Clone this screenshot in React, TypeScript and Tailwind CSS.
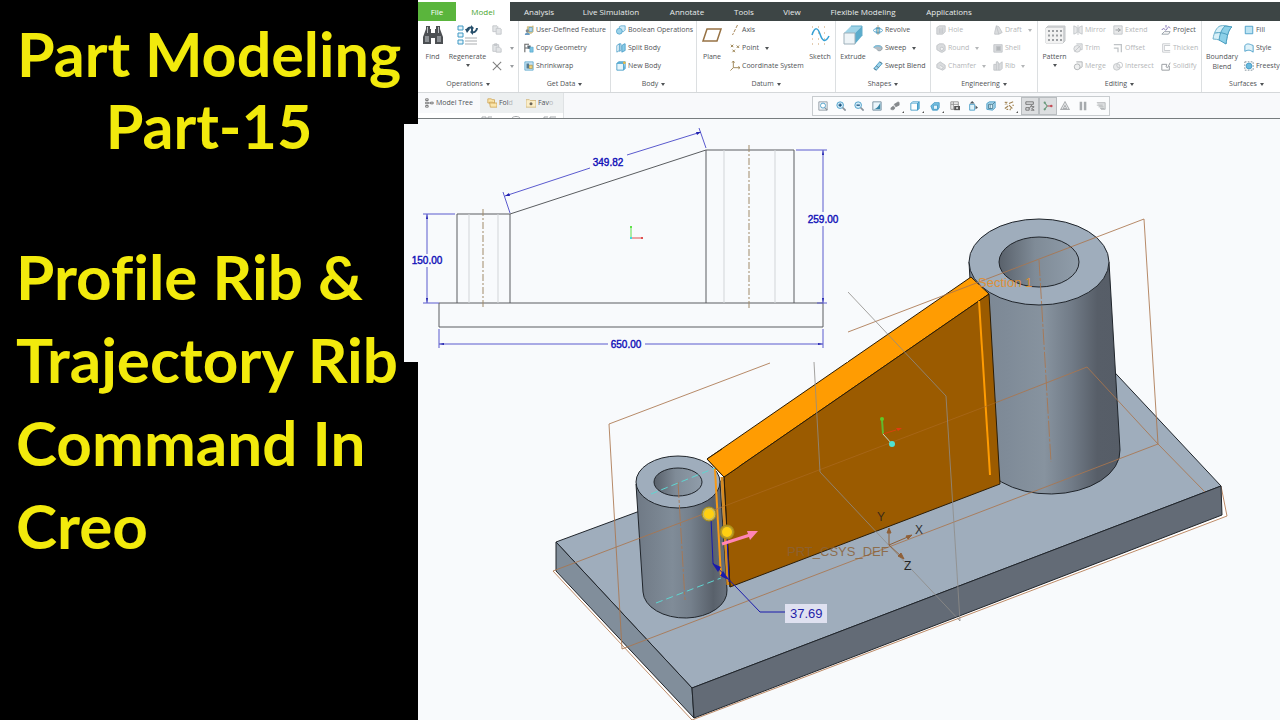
import React from 'react';

const blue = '#3f98c4';
const steel = '#8a949c';
const pale = '#bfc3c6';

// Glyphs of the small commands, all on a 12 x 12 grid
const glyphs: Record<string, React.ReactNode> = {
    copy: <g fill="#e3e5e7" stroke={pale}><path d="M1 1h5l1 1v6H1z" /><path d="M5 4h5l1 1v6H5z" /></g>,
    paste: <g fill="#e3e5e7" stroke={pale}><path d="M1 2h7v8H1zM3 1h3v2H3z" /><path d="M5 5h4l2 2v4H5z" /></g>,
    remove: <path d="M1 1l10 10M11 1L1 11" stroke="#808080" strokeWidth="1.3" />,
    userFeature: <g><path d="M4 2h5l2-1v7l-2 2H4z" fill="#e8cf88" stroke="#b39a5a" strokeWidth=".6" /><path d="M6 3h4v5H6z" fill="#b9d8ee" stroke={blue} strokeWidth=".7" /><circle cx="4" cy="7" r="2" fill="#888" /><path d="M1 12c0-4 6-4 6 0z" fill="#6a9bc4" /></g>,
    copyGeometry: <g><path d="M1 1v10M1 1.500h5M1 6h3" stroke="#666" strokeWidth="1.300" fill="none" /><path d="M4 3h4v4H4z" fill="#5d6b76" /><path d="M7 5h4v6H7z" fill="#7cc3e2" stroke={blue} strokeWidth=".6" /></g>,
    shrinkwrap: <g><path d="M1 1h10v10H1z" fill="#c7e3f2" stroke={blue} strokeWidth=".8" /><path d="M3 3h3v6H3z" fill="#527a95" /><path d="M6 5h4v4H6z" fill="#f1d277" stroke="#8f7a38" strokeWidth=".6" /></g>,
    booleanOps: <g stroke={blue} strokeWidth=".8"><path d="M4 2l2-1h5v5l-2 2H4z" fill="#cfeaf6" /><circle cx="4" cy="7.500" r="3.500" fill="#9bd2ea" /></g>,
    split: <g stroke={blue} strokeWidth=".9"><path d="M1 3l3-2v8l-3 2z" fill="#fff" /><path d="M4 1h2v8l-2 1z" fill="#d7eef8" /><path d="M7 3l3-2h1v8l-4 2z" fill="#8ccbe6" /></g>,
    newBody: <g><path d="M1 3h8v8H1z" fill="#e6f5fb" stroke={blue} /><path d="M1 3l2-2h8L9 3M9 11l2-2V1" fill="#6bbadd" stroke={blue} /><circle cx="10" cy="2" r="1.500" fill="#f0b73a" /></g>,
    axis: <path d="M9 0L3 12" stroke="#a88658" strokeWidth="1.200" strokeDasharray="4 1.500" />,
    point: <path d="M1 2l3 3M4 2L1 5M8 3l3 3M11 3L8 6M3 8l3 3M6 8l-3 3" stroke="#9c8352" strokeWidth="1.200" />,
    csys: <path d="M4 0v8h8M4 8l-3.500 3.500M2.500 2L4 0l1.500 2M10 6.500L12 8l-2 1.500" fill="none" stroke="#9c8352" strokeWidth="1.100" />,
    revolve: <g><path d="M4 3h4v7H4z" fill="#b9e0f0" stroke={blue} strokeWidth=".8" /><ellipse cx="6" cy="6.500" rx="5.500" ry="2.300" fill="none" stroke={blue} /><path d="M6 0v12" stroke="#a07a48" strokeWidth=".7" /></g>,
    sweep: <g><path d="M1 6c0-4 10-4 10 0s-5 4-6 2" fill="#b3bdc4" stroke="#8a979f" /><path d="M1 5c3-2 6-2 9 0" stroke="#7cc3e2" fill="none" strokeWidth="1.500" /></g>,
    sweptBlend: <g><path d="M1 9l7-8 3 2-7 8z" fill="#9dd3ea" stroke={blue} /><path d="M1 9l3 2M4 6l3 2M8 1l3 2" stroke="#5d7683" /></g>,
    hole: <g stroke={pale}><path d="M1 3l3-2h7v7l-3 3H1z" fill="#dadcde" /><path d="M4 4v6M6 4v6M8 3v7" /></g>,
    round: <g stroke={pale}><path d="M1 3l3-2h4c2 0 3 2 3 4v4l-3 2H6L1 8z" fill="#dadcde" /><circle cx="7" cy="7" r="2" fill="#f3f3f3" /></g>,
    chamfer: <g stroke={pale}><path d="M1 4l4-3 6 4v4l-3 2-7-3z" fill="#dadcde" /><path d="M5 5l4 3-3 2" fill="#f3f3f3" /></g>,
    draft: <g stroke={pale}><path d="M2 9l2-8 3 1 4 7-4 2H2z" fill="#dadcde" /><path d="M4 1l3 10" /></g>,
    shell: <g stroke={pale}><path d="M1 2h10v9H1z" fill="#dadcde" /><path d="M4 4h5v5H4z" fill="#b4b7ba" /></g>,
    rib: <g stroke={pale}><path d="M1 4h3V1h2l1 3 4-3v8l-2 2H1z" fill="#dadcde" /><path d="M4 4v7M7 4v7" /></g>,
    mirror: <path d="M1 1l4 2v6l-4 2zM11 1L7 3v6l4 2zM6 0v12" fill="#e8e9ea" stroke={pale} />,
    trim: <g stroke={pale} fill="#e8e9ea"><path d="M4 1h7v7H8" /><circle cx="5" cy="7" r="4" /><path d="M2 10l7-7" /></g>,
    merge: <g stroke="#a9adb0" fill="#eff0f0"><path d="M4 1h7v6L8 9" /><circle cx="5" cy="7" r="3.500" /></g>,
    extend: <g stroke={pale} fill="#e8e9ea"><path d="M1 1h10v10H1z" /><path d="M3 6h5M6 4l3 2-3 2" stroke="#8d9194" /></g>,
    offset: <g stroke={pale} fill="none" strokeWidth="1.500"><path d="M1 2h9v9" /><path d="M1 6h5v5" /></g>,
    intersect: <g stroke={pale} fill="#e8e9ea"><circle cx="4.500" cy="7" r="4" /><circle cx="8" cy="5" r="3.500" fill="none" /></g>,
    project: <g fill="none"><path d="M1 6c3-5 4 3 6-1s3-3 4-1" stroke="#6c5ca6" /><path d="M1 11l3-3h7l-2 3z" stroke={steel} /><path d="M6 0v3" stroke="#6c5ca6" /></g>,
    thicken: <path d="M11 1H2v10h9M11 3H4v6h7" fill="none" stroke={pale} />,
    solidify: <path d="M1 4h6l-1 3 2 1 3-6M1 4v7h9V6" fill="none" stroke="#9da1a5" strokeWidth="1.200" />,
    fill: <path d="M1.500 1.500h9v9h-9z" fill="#bde4f3" stroke={blue} />,
    style: <path d="M1 10V3c3-3 5-2 10 0v8c-4-3-6-3-10-1z" fill="#dff2f9" stroke={blue} />,
    freestyle: <g><path d="M1 1h10v10H1z" fill="none" stroke="#6d7f8a" strokeDasharray="2 1.500" /><circle cx="6" cy="6" r="3.500" fill="#6bbadd" stroke={blue} /></g>,
    refit: <g fill="none" stroke={steel}><path d="M1 1h10v10H1z" fill="#edf3f7" /><circle cx="6" cy="5.500" r="3" stroke={blue} fill="#fff" /><path d="M8 8l3 3" strokeWidth="1.500" /></g>,
    zoomIn: <g><circle cx="5" cy="5" r="4" fill="#d4edfa" stroke={blue} /><path d="M3 5h4M5 3v4" stroke="#174d78" strokeWidth="1.500" /><path d="M8 8l3.500 3.500" stroke={steel} strokeWidth="2" /></g>,
    zoomOut: <g><circle cx="5" cy="5" r="4" fill="#d4edfa" stroke={blue} /><path d="M3 5h4" stroke="#174d78" strokeWidth="1.500" /><path d="M8 8l3.500 3.500" stroke={steel} strokeWidth="2" /></g>,
    repaint: <g><path d="M1 1h10v10H1z" fill="#eaf6fb" stroke="#6b8797" /><path d="M10 2v8H2C6 9 8 6 10 2z" fill="#3986a6" /></g>,
    rendering: <path d="M1 10c0-3 2-3 3-4l2 2c-1 3-3 3-5 2zM5 4l5-3 1 1v3L7 7z" fill="#85898c" stroke="#85898c" strokeWidth=".8" />,
    display: <g stroke={blue}><path d="M1 3h8v8H1z" fill="#fff" /><path d="M1 3l2-2h8L9 3" fill="#d4edfa" /><path d="M9 3l2-2v8l-2 2z" fill="#6bbadd" /></g>,
    orient: <g stroke={blue}><path d="M1 6l4-4h6v6l-2 3H3z" fill="#7bc1e1" /><path d="M4 5h5v5H4z" fill="#e6f5fb" /></g>,
    viewMgr: <g><path d="M1 1h9v9H1zM1 4h9M4 1v9" fill="#f6f6f6" stroke="#888" /><path d="M5 6h7v5H5z" fill="#555" /><circle cx="8.500" cy="8.500" r="1.300" fill="#ddd" /></g>,
    annotation: <g><path d="M2 4h6v7H2z" fill="#dff2f9" stroke={blue} /><path d="M5 0l3 3H2zM9 5l3 3-3 2z" fill="#4f5b62" /></g>,
    section: <g stroke={blue}><path d="M1 3l3-2h7v7l-3 3-7-1z" fill="#a7d6ea" /><path d="M3 4h5v5H3zM8 4l3-3M5 4v5" fill="#dff2f9" stroke="#457890" /></g>,
    datums: <path d="M1 1l3 3M4 1L1 4M6 3l5-2M1 9l4-3M6 5l4 4M3 10h2M7 11l1-2M10 5h2" stroke="#a08352" strokeWidth="1.300" />,
    notes: <g fill="none" stroke="#666"><path d="M1 1h9v3H1zM1 8h4v3H1zM7 6l4 1-3 2 3 2H7" /><path d="M5 9l3-4" /></g>,
    spin: <g strokeWidth="1.300"><path d="M5 6h5" stroke="#c34b55" /><path d="M2 2l3 4-3 4" stroke="#6b9a7c" fill="none" /><circle cx="2" cy="2" r="1.300" fill="#6b9a7c" /><circle cx="2" cy="10" r="1.300" fill="#6b9a7c" /><circle cx="10" cy="6" r="1.500" fill="#c34b55" /></g>,
    regen: <path d="M6 1l5 9H1zM6 5l2 4H4z" fill="none" stroke="#acafb2" strokeWidth="1.300" />,
    pause: <path d="M2 1h3v10H2zM7 1h3v10H7z" fill="#a6aaad" />,
    exit: <g stroke="#b0b3b6" fill="#dddfe0"><path d="M1 2h10v8H6" /><path d="M1 5h7M3 7h6M5 9h5" /></g>,
    tree: <path d="M2 1h3v2H2zM2 5h3v2H2zM2 9h3v2H2zM8 5h3v2H8zM5 6h3" fill="none" stroke="#666" />,
    folder: <path d="M1 1h4l1 1h3v4H1zM3 5h4l1 1h4v5H4z" fill="#fbe6ac" stroke="#cfa658" />,
    favorite: <g><path d="M0 2h4l1 1h7v8H0z" fill="#fbeec8" stroke="#cfb578" /><circle cx="6" cy="7" r="1.800" fill="#6d6658" /></g>,
};

const Glyph: React.FC<{ name: string }> = ({ name }) => (
    <svg viewBox="0 0 12 12" fill="none" className="h-[10px] w-[10px] shrink-0" aria-hidden="true">{glyphs[name]}</svg>
);

const Arrow: React.FC = () => (
    <svg viewBox="0 0 4 3" className="h-[3px] w-[4px] shrink-0" aria-hidden="true"><path d="M0 0h4L2 3z" fill="currentColor" /></svg>
);

const Command: React.FC<{ icon: string; label: string; menu?: boolean; disabled?: boolean }> = ({ icon, label, menu, disabled }) => (
    <button disabled={disabled} className="flex h-[18px] items-center gap-[2px] whitespace-nowrap disabled:text-[#b4b6b8]">
        <Glyph name={icon} />
        <span>{label}</span>
        {menu && <span className="ml-1"><Arrow /></span>}
    </button>
);

const BigCommand: React.FC<{ label: string; second?: string; menu?: boolean; width: string; children: React.ReactNode }> = ({ label, second, menu, width, children }) => (
    <button className={`flex h-[54px] shrink-0 flex-col items-center pt-[3px] ${width}`}>
        <svg viewBox="0 0 22 22" fill="none" className="h-[22px] w-[22px]" aria-hidden="true">{children}</svg>
        <span className="mt-[6px] leading-[10px]">{label}</span>
        {second && <span className="leading-[9px]">{second}</span>}
        {menu && <span className="pt-[2px]"><Arrow /></span>}
    </button>
);

const Group: React.FC<{ title: string; width: string; children: React.ReactNode }> = ({ title, width, children }) => (
    <section className={`flex shrink-0 flex-col border-r border-[#dcdfe1] ${width}`}>
        <div className="flex h-[54px]">{children}</div>
        <button className="flex h-[18px] items-center justify-center gap-[3px] pt-[2px]">{title}<Arrow /></button>
    </section>
);

const Tabs: React.FC = () => (
    <nav className="mt-[2px] flex h-[19px] shrink-0 items-stretch overflow-hidden bg-[#3d4545] text-[8px] text-[#e8ecec]">
        <button className="w-[38px] shrink-0 bg-[#5ab53c] text-white">File</button>
        <button className="w-[54px] shrink-0 bg-white text-[#4aa52e]">Model</button>
        <button className="w-[58px] shrink-0">Analysis</button>
        <button className="w-[86px] shrink-0">Live Simulation</button>
        <button className="w-[66px] shrink-0">Annotate</button>
        <button className="w-[48px] shrink-0">Tools</button>
        <button className="w-[48px] shrink-0">View</button>
        <button className="w-[94px] shrink-0">Flexible Modeling</button>
        <button className="w-[78px] shrink-0">Applications</button>
    </nav>
);

const Ribbon: React.FC = () => (
    <div className="flex h-[72px] shrink-0 overflow-hidden border-b border-[#d5d8da] bg-white text-[7px] text-[#505356]">
        <Group title="Operations" width="w-[101px]">
            <BigCommand label="Find" width="w-[29px]">
                <path d="M4 2h4v3h1v4h4V5h1V2h4v3l3 8v7h-8v-6H9v6H1v-7l3-8z" fill="#4c4f52" />
                <path d="M3 12h4v6H3zM15 12h4v6h-4z" fill="#8b8f93" />
                <path d="M5 3h1v6H5zM16 3h1v6h-1z" fill="#b9bcbf" />
            </BigCommand>
            <BigCommand label="Regenerate" menu width="w-[41px]">
                <path d="M1 2h5v4H1zM1 9h5v4H1zM1 16h5v4H1z" fill="#e6f5fb" stroke={blue} />
                <path d="M10 7c0-3 3-4 5-3M20 4c0 3-3 5-5 4" stroke="#28506c" strokeWidth="2" />
                <path d="M14 1v6l3-3zM16 5v6l-3-3zM8 5h5l-3 4z" fill="#28506c" />
                <path d="M8 14h12M8 17h12M8 20h12" stroke="#a9adb0" />
            </BigCommand>
            <div className="flex flex-1 flex-col pl-1 text-[#9a9da0]">
                <button aria-label="Copy" className="flex h-[18px] items-center"><Glyph name="copy" /></button>
                <button aria-label="Paste" className="flex h-[18px] items-center gap-2"><Glyph name="paste" /><Arrow /></button>
                <button aria-label="Delete" className="flex h-[18px] items-center gap-2"><Glyph name="remove" /><Arrow /></button>
            </div>
        </Group>
        <Group title="Get Data" width="w-[92px]">
            <div className="flex flex-col pl-[5px]">
                <Command icon="userFeature" label="User-Defined Feature" />
                <Command icon="copyGeometry" label="Copy Geometry" />
                <Command icon="shrinkwrap" label="Shrinkwrap" />
            </div>
        </Group>
        <Group title="Body" width="w-[86px]">
            <div className="flex flex-col pl-[5px]">
                <Command icon="booleanOps" label="Boolean Operations" />
                <Command icon="split" label="Split Body" />
                <Command icon="newBody" label="New Body" />
            </div>
        </Group>
        <Group title="Datum" width="w-[139px]">
            <BigCommand label="Plane" width="w-[30px]">
                <path d="M6 5h14l-4 12H2z" stroke="#977244" strokeWidth="1.500" />
            </BigCommand>
            <div className="flex w-[78px] flex-col pl-[3px]">
                <Command icon="axis" label="Axis" />
                <Command icon="point" label="Point" menu />
                <Command icon="csys" label="Coordinate System" />
            </div>
            <BigCommand label="Sketch" width="w-[30px]">
                <path d="M3 3h18M3 9h18M3 15h18M3 20h18" stroke="#c99a62" strokeDasharray="1 5" />
                <path d="M3 11c3-9 6-7 8-1s5 10 9 2" stroke="#35a0d4" strokeWidth="1.500" />
            </BigCommand>
        </Group>
        <Group title="Shapes" width="w-[95px]">
            <BigCommand label="Extrude" width="w-[34px]">
                <path d="M2 9l7-7h11l-7 7z" fill="#9fd4e8" />
                <path d="M13 9l7-7v10l-7 8z" fill="#5aaccc" />
                <path d="M2 9h11v11H2z" fill="#eef4f7" stroke="#9eb0ba" />
                <path d="M9 2h11v10" stroke="#65adca" />
            </BigCommand>
            <div className="flex flex-col pl-[3px]">
                <Command icon="revolve" label="Revolve" />
                <Command icon="sweep" label="Sweep" menu />
                <Command icon="sweptBlend" label="Swept Blend" />
            </div>
        </Group>
        <Group title="Engineering" width="w-[107px]">
            <div className="flex w-[62px] flex-col pl-[5px]">
                <Command icon="hole" label="Hole" disabled />
                <Command icon="round" label="Round" menu disabled />
                <Command icon="chamfer" label="Chamfer" menu disabled />
            </div>
            <div className="flex flex-col">
                <Command icon="draft" label="Draft" menu disabled />
                <Command icon="shell" label="Shell" disabled />
                <Command icon="rib" label="Rib" menu disabled />
            </div>
        </Group>
        <Group title="Editing" width="w-[164px]">
            <BigCommand label="Pattern" menu width="w-[33px]">
                <path d="M2 4l2-2h17v15l-2 2H2z" fill="#d0d2d4" stroke="#c3c6c8" />
                <path d="M2 4h17v15H2z" fill="#f2f2f2" />
                <path d="M4 7h14M4 11.500h14M4 16h14" stroke="#9c9fa2" strokeWidth="2" strokeDasharray="2 2" />
            </BigCommand>
            <div className="flex w-[42px] flex-col pl-[2px]">
                <Command icon="mirror" label="Mirror" disabled />
                <Command icon="trim" label="Trim" disabled />
                <Command icon="merge" label="Merge" disabled />
            </div>
            <div className="flex w-[48px] flex-col">
                <Command icon="extend" label="Extend" disabled />
                <Command icon="offset" label="Offset" disabled />
                <Command icon="intersect" label="Intersect" disabled />
            </div>
            <div className="flex flex-col">
                <Command icon="project" label="Project" />
                <Command icon="thicken" label="Thicken" disabled />
                <Command icon="solidify" label="Solidify" disabled />
            </div>
        </Group>
        <Group title="Surfaces" width="w-[90px]">
            <BigCommand label="Boundary" second="Blend" width="w-[40px]">
                <path d="M2 15C3 8 6 3 9 2c3-1 7 0 12 1-4 3-5 10-6 17-3-3-8-5-13-5z" fill="#d8f0f8" stroke="#6fb2cc" />
                <path d="M14 2c-4 4-5 8-6 14l7 4c1-7 2-14 6-17z" fill="#8cd0e8" stroke="#4d9fc0" />
                <path d="M4 9c5-1 9 0 13 2" stroke="#4d9fc0" />
            </BigCommand>
            <div className="flex flex-col pl-[2px]">
                <Command icon="fill" label="Fill" />
                <Command icon="style" label="Style" />
                <Command icon="freestyle" label="Freesty" />
            </div>
        </Group>
    </div>
);

const viewTools = [
    { icon: 'refit', label: 'Refit' },
    { icon: 'zoomIn', label: 'Zoom in' },
    { icon: 'zoomOut', label: 'Zoom out' },
    { icon: 'repaint', label: 'Repaint' },
    { icon: 'rendering', label: 'Rendering', menu: true },
    { icon: 'display', label: 'Display style', menu: true },
    { icon: 'orient', label: 'Saved orientations', menu: true },
    { icon: 'viewMgr', label: 'View manager' },
    { icon: 'annotation', label: 'Annotations' },
    { icon: 'section', label: 'Section' },
    { icon: 'datums', label: 'Datum display', menu: true },
    { icon: 'notes', label: 'Annotation display', active: true },
    { icon: 'spin', label: 'Spin center', active: true },
    { icon: 'regen', label: 'Simulate' },
    { icon: 'pause', label: 'Pause' },
    { icon: 'exit', label: 'Exit' },
];

const ViewBar: React.FC = () => (
    <div className="flex h-[26px] shrink-0 justify-between border-b border-[#777c7e] bg-[#f8f9fb] text-[7px] text-[#505356]">
        <div className="w-[146px] shrink-0 overflow-hidden border-r border-[#dfe2e4] bg-white">
            <div className="flex h-[20px] bg-[#eceff0]">
                <button className="flex w-[62px] items-center gap-[2px] bg-[#f8f9fb] pl-[6px]"><Glyph name="tree" />Model Tree</button>
                <button className="flex w-[41px] items-center gap-[2px] pl-[7px]"><Glyph name="folder" /><span>Fol</span><span className="-ml-[2px] text-[#b4b6b8]">d</span></button>
                <button className="flex items-center gap-[2px] pl-[5px]"><Glyph name="favorite" /><span>Fav</span><span className="-ml-[2px] text-[#b4b6b8]">o</span></button>
            </div>
            <svg viewBox="0 0 146 5" className="h-[5px] w-[146px]" aria-hidden="true">
                <path d="M64 5V4h4v1M70 5V4h4M94 5c1-2 7-2 8 0M126 5V4h4M132 5V4h6" fill="none" stroke="#a4a8ab" />
            </svg>
        </div>
        <div className="mt-[3px] mr-[170px] flex h-[20px] w-[298px] shrink-0 border border-[#c8cccf] bg-[#fbfcfd] pl-[2px]">
            {viewTools.map((tool) => (
                <button
                    key={tool.icon}
                    aria-label={tool.label}
                    className={`flex h-full shrink-0 items-center pl-[3px] ${tool.menu ? 'w-[20px]' : 'w-[18px]'} ${tool.active ? 'border border-[#b9bdc0] bg-[#dcdee0]' : ''}`}
                >
                    <Glyph name={tool.icon} />
                    {tool.menu && <svg viewBox="0 0 3 3" className="mb-[2px] ml-[2px] h-[2px] w-[2px] self-end" aria-hidden="true"><path d="M3 0v3H0z" fill="#555" /></svg>}
                </button>
            ))}
        </div>
    </div>
);

const Model: React.FC = () => (
    <svg viewBox="418 119 862 601" preserveAspectRatio="xMinYMin slice" className="absolute inset-0 h-full w-full" role="img" aria-label="Rib between two bosses">
        <defs>
            <linearGradient id="boss" x1="0" x2="1" y1="0" y2="0">
                <stop offset="0" stopColor="#7b8692" />
                <stop offset=".25" stopColor="#7f8b98" />
                <stop offset=".5" stopColor="#87939f" />
                <stop offset=".68" stopColor="#717b87" />
                <stop offset=".85" stopColor="#575e68" />
                <stop offset="1" stopColor="#565d67" />
            </linearGradient>
            <linearGradient id="smallBoss" x1="0" x2="1" y1="0" y2="0">
                <stop offset="0" stopColor="#6f7985" />
                <stop offset=".4" stopColor="#808c98" />
                <stop offset=".6" stopColor="#75808c" />
                <stop offset=".85" stopColor="#59616b" />
                <stop offset="1" stopColor="#69727d" />
            </linearGradient>
            <linearGradient id="bore" x1="0" x2="1" y1="0" y2="0">
                <stop offset="0" stopColor="#59616b" />
                <stop offset=".45" stopColor="#7f8b97" />
                <stop offset="1" stopColor="#909daa" />
            </linearGradient>
        </defs>

        {/* base plate */}
        <path d="M553 571L692 720L1227 516L1221 486" fill="#fff" stroke="#bd8b68" />
        <g stroke="#20252b" strokeLinejoin="round">
            <path d="M556 542L1089 345L1221 486L692 688z" fill="#9fadbc" />
            <path d="M556 542L692 688L694 718L556 571z" fill="#818e9b" />
            <path d="M692 688L1221 486L1222 515L694 718z" fill="#636b76" />
        </g>

        {/* bosses */}
        <path d="M969 262L980 452A70 43 0 0 0 1120 450L1109 262z" fill="url(#boss)" stroke="#20252b" />
        <path d="M636 484L643 592A42 27 0 0 0 727 590L720 482z" fill="url(#smallBoss)" stroke="#20252b" />

        {/* rib, with the caps of the bosses over its ends */}
        <g stroke="#2b1c05" strokeLinejoin="round">
            <path d="M707 459L971 277L989 294L724 477z" fill="#ff9c02" />
            <path d="M724 477L989 294L1000 484L730 587z" fill="#9b5b00" />
        </g>
        <g stroke="#20252b">
            <ellipse cx="1039" cy="262" rx="70" ry="43" fill="#9fadbc" />
            <ellipse cx="1039" cy="262" rx="40" ry="25" fill="url(#bore)" />
            <ellipse cx="678" cy="482" rx="42" ry="26" fill="#9fadbc" />
            <ellipse cx="678" cy="482" rx="24" ry="14" fill="url(#bore)" />
        </g>
        <path d="M707 459L724 477L740 466L722 449z" fill="#ff9c02" />
        <path d="M722 449L707 459L724 477L740 466" fill="none" stroke="#2b1c05" />
        <path d="M715 469L721 577" stroke="#f79a16" strokeWidth="2" />
        <path d="M722 477L728 585" stroke="#d58b23" strokeWidth="3" />
        <path d="M724 477L730 587" stroke="#2b1c05" />
        <path d="M979 301L990 475" stroke="#ff9c02" strokeWidth="2" />

        {/* datum planes and axes */}
        <g fill="none" stroke="#aa764e" strokeOpacity=".85">
            <path d="M770 363L609 424L622 649L1158 444L1144 219L848 332" />
            <path d="M553 571L722 507M1000 401L1087 367L1158 444L1205 492" />
            <path d="M722 507L1000 401" stroke="#ad6c25" strokeOpacity=".6" />
            <path d="M678 482L685 600M1039 260L1051 462" strokeDasharray="16 2 3 2" />
        </g>
        <path d="M814 362L820 472L960 621L946 396L848 292" fill="none" stroke="#8f8c88" strokeOpacity=".8" />
        <path d="M651 494L715 468M656 603L721 578" stroke="#5fd6d2" strokeDasharray="7 4" />

        {/* coordinate system */}
        <g fill="none" stroke="#8f6038">
            <path d="M889 545V529M889 545L910 536M889 545L903 558" />
            <path d="M889 528l-2 5h4zM912 535l-6 1l2 3zM904 559l-6-3l3-3z" fill="#8f6038" />
        </g>
        <g fontFamily="Liberation Sans, sans-serif">
            <text x="787" y="556" fontSize="13" fill="#8a6238" fillOpacity=".85">PRT_CSYS_DEF</text>
            <text x="877" y="521" fontSize="12" fill="#3b2a18">Y</text>
            <text x="915" y="534" fontSize="12" fill="#333">X</text>
            <text x="904" y="570" fontSize="12" fill="#222">Z</text>
            <text x="978" y="287" fontSize="13" fill="#dd9038">Section 1</text>
        </g>

        {/* spin center */}
        <path d="M883 434L882 420" stroke="#62b82e" strokeWidth="2" />
        <path d="M883 434L896 430" stroke="#d8420c" />
        <path d="M902 428l-6 0l2 3z" fill="#e03c10" />
        <path d="M883 434L892 444" stroke="#c9d8c4" />
        <circle cx="882" cy="419" r="2" fill="#5fc928" />
        <circle cx="892" cy="444" r="3" fill="#4fe3d2" />

        {/* thickness handles */}
        <path d="M711 518L713 563L760 612H785M727 536L729 582" fill="none" stroke="#1a1aac" />
        <path d="M712 563l9 4l-3 5zM729 580l-9-4l3-5z" fill="#1a1aac" />
        <g fill="#ffd012" stroke="#a98c12">
            <circle cx="709" cy="514" r="7" fill="#c9b95a" />
            <circle cx="709" cy="514" r="5" stroke="none" />
            <circle cx="727" cy="532" r="7" fill="#b99a2a" />
            <circle cx="727" cy="532" r="5" stroke="none" />
        </g>
        <path d="M722 544L750 535" stroke="#ff85b5" strokeWidth="3" />
        <path d="M758 531L747 531L750 540z" fill="#ff85b5" />
        <path d="M785 604h42v19h-42z" fill="#dfe1f0" />
        <text x="790" y="618" fontSize="13" fill="#1f1fa8" fontFamily="Liberation Sans, sans-serif">37.69</text>
    </svg>
);

const FrontView: React.FC = () => (
    <svg viewBox="404 124 444 238" className="absolute top-[5px] -left-[14px] h-[238px] w-[444px] bg-[#f8fafc]" role="img" aria-label="Front view with dimensions">
        <g fill="none" stroke="#5a5d60">
            <path d="M439 303H823V327H439z" />
            <path d="M457 303V214H510V303M706 303V150H794V303M510 214L706 150" />
        </g>
        <path d="M469 214V303M498 214V303M724 150V303M775 150V303" stroke="#d2d5d8" />
        <path d="M483 209V309M749 145V309" stroke="#a08a68" strokeDasharray="7 2 2 2" />
        <g fill="none" stroke="#5a5ace">
            <path d="M423 214H455M423 303H439M427 214V254M427 267V303" />
            <path d="M796 150H827M817 303H827M823 150V212M823 226V303" />
            <path d="M439 329V348M823 329V348M439 344H608M645 344H823" />
            <path d="M510 213L503 192M706 148L699 128M505 196L590 168M627 155L701 132" />
        </g>
        <g fill="#2222b0">
            <path d="M427 214l-1 5h2zM427 303l-1-5h2zM823 150l-1 5h2zM823 303l-1-5h2z" />
            <path d="M439 344l5-1v2zM823 344l-5-1v2zM505 196l4-3l1 3zM701 132l-5 0l1 3z" />
        </g>
        <g fontFamily="Liberation Sans, sans-serif" fontSize="10" fill="#1111b8" stroke="#1111b8" strokeWidth=".4" textAnchor="middle">
            <text x="608" y="166">349.82</text>
            <text x="427" y="264">150.00</text>
            <text x="823" y="223">259.00</text>
            <text x="626" y="348">650.00</text>
        </g>
        <path d="M631 238V227" stroke="#5fe04a" />
        <path d="M631 238H643" stroke="#e05050" />
        <path d="M630 226h2v2h-2z" fill="#5fe04a" />
        <path d="M641 237h2v2h-2z" fill="#e05050" />
        <path d="M630 237h2v2h-2z" fill="#3fd8e0" />
    </svg>
);

export default function App() {
    return (
        <div className="flex h-screen overflow-hidden bg-black">
            <aside className="w-[418px] shrink-0 whitespace-nowrap font-['Lato',sans-serif] font-bold text-[#f2ea0c] [font-variant-ligatures:none]">
                <h1 className="pt-[18px] text-center text-[61px] leading-[72px]">
                    Part Modeling<br />Part-15
                </h1>
                <p className="pt-[73px] pl-4 text-[62px] leading-[83px]">
                    Profile Rib &amp;<br />Trajectory Rib<br />Command In<br />Creo
                </p>
            </aside>
            <main className="flex min-w-0 flex-1 flex-col bg-white font-['Open_Sans','Noto_Sans',sans-serif]">
                <Tabs />
                <Ribbon />
                <ViewBar />
                <div className="relative min-h-0 flex-1 bg-[#f8fafc]">
                    <Model />
                    <FrontView />
                </div>
            </main>
        </div>
    );
}
